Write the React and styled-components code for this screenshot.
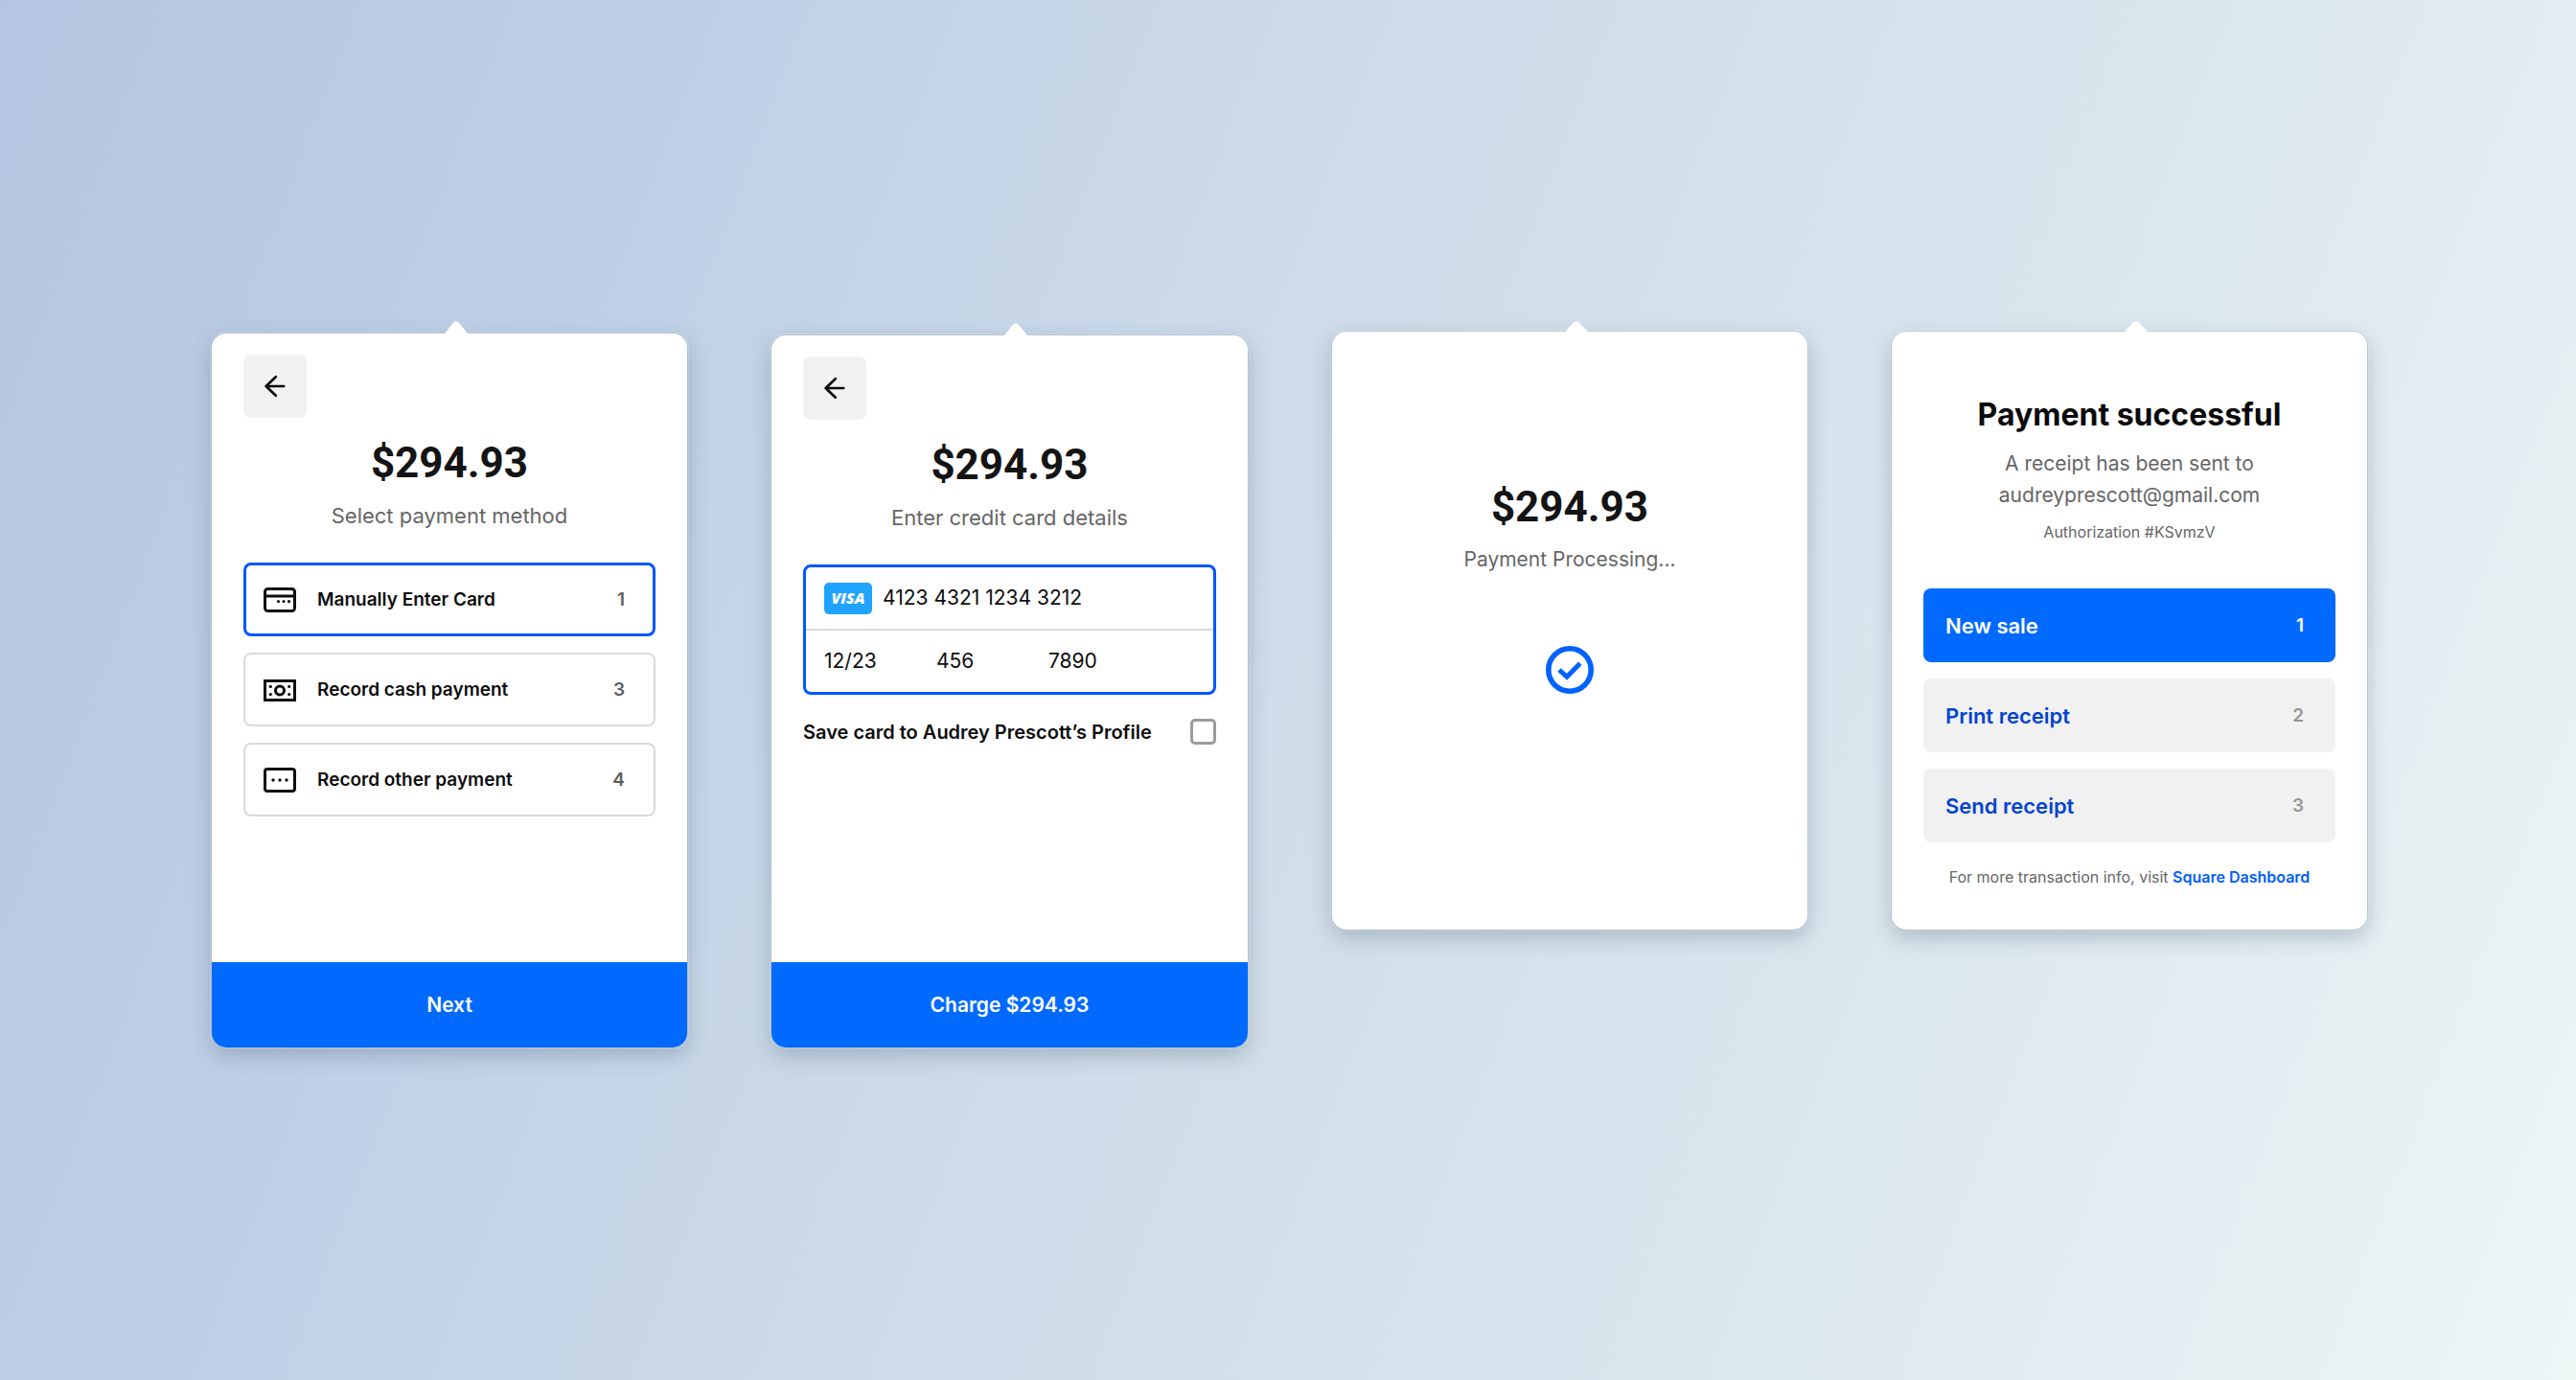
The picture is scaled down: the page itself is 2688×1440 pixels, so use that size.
import React from "react";
import styled, { createGlobalStyle, css } from "styled-components";

const GlobalStyle = createGlobalStyle`
  *, *::before, *::after { box-sizing: border-box; }
  body {
    margin: 0;
    font-family: Inter, "Liberation Sans", sans-serif;
    color: #1a1a1a;
  }
  button, input { font: inherit; color: inherit; }
  h1, h2, p { margin: 0; }
`;

const Page = styled.main`
  min-height: 100vh;
  display: grid;
  grid-template-columns: repeat(4, 1fr);
  align-content: start;
  align-items: end;
  column-gap: 88px;
  padding: 335px 218px 64px 221px;
  background: linear-gradient(111deg, #b3c5e0 0%, #c0d0e6 24%, #cfdce9 48%, #dce8ef 74%, #edf5f5 100%);
`;

const Screen = styled.section`
  display: flex;
  flex-direction: column;
  align-self: ${(p) => (p.$short ? "start" : "end")};
`;

const NotchRow = styled.div`
  display: flex;
  justify-content: center;
  height: ${(p) => (p.$short ? 11 : 13)}px;
  padding-left: 13px;
`;

const NotchShape = styled.svg`
  position: relative;
  z-index: 1;
  width: 26px;
  height: ${(p) => (p.$short ? 12 : 14)}px;
  flex: none;
  display: block;
`;

const CardBox = styled.div`
  display: flex;
  flex-direction: column;
  min-height: ${(p) => p.$minHeight}px;
  border-radius: 15px;
  overflow: hidden;
  background: #fff;
  box-shadow:
    0 0 0 1px rgba(160, 178, 196, 0.5),
    0 0 0 2px rgba(255, 255, 255, 0.2),
    0 8px 22px rgba(60, 80, 100, 0.3);
`;

const Body = styled.div`
  flex: 1;
  display: flex;
  flex-direction: column;
  padding: ${(p) => p.$top}px 33px 32px;
`;

const BackButton = styled.button`
  width: 66px;
  height: 66px;
  margin-bottom: 19px;
  display: grid;
  place-items: center;
  padding: 0;
  border: 0;
  border-radius: 8px;
  background: #f1f1f1;
  color: #0d0d0d;
`;

const Amount = styled.h1`
  font-family: Roboto, "Liberation Sans", sans-serif;
  font-size: 44px;
  font-weight: 700;
  line-height: 56px;
  text-align: center;
  color: #141414;
`;

const Subtitle = styled.p`
  margin-top: 11px;
  font-size: ${(p) => (p.$compact ? 21 : 22)}px;
  line-height: 32px;
  text-align: center;
  color: #666;
`;

const Stack = styled.div`
  display: flex;
  flex-direction: column;
  gap: 17px;
  margin-top: ${(p) => p.$top}px;
`;

const rowButton = css`
  display: flex;
  align-items: center;
  height: 77px;
  border-radius: 8px;
  text-align: left;
`;

const Method = styled.button`
  ${rowButton}
  gap: 22px;
  padding: 0 ${(p) => (p.$selected ? 29 : 30)}px 0 ${(p) => (p.$selected ? 18 : 19)}px;
  border: ${(p) => (p.$selected ? "3px solid #0055ff" : "2px solid #dadada")};
  background: #fff;
  color: #0d0d0d;
  font-size: 19px;
  font-weight: 600;
`;

const Action = styled.button`
  ${rowButton}
  padding: 0 33px 0 23px;
  border: 0;
  background: ${(p) => (p.$primary ? "#006aff" : "#f1f1f1")};
  color: ${(p) => (p.$primary ? "#fff" : "#0044d0")};
  font-size: 22px;
  font-weight: 600;
`;

const RowLabel = styled.span`
  flex: 1;
`;

const Shortcut = styled.span`
  font-size: 19px;
  font-weight: 600;
  color: ${(p) => p.$color};
`;

const Submit = styled.button`
  height: 89px;
  border: 0;
  background: #006aff;
  color: #fff;
  font-size: 21px;
  font-weight: 600;
`;

const CardFields = styled.div`
  margin-top: 33px;
  border: 3px solid #0055ff;
  border-radius: 8px;
`;

const FieldRow = styled.div`
  display: flex;
  align-items: center;
  height: ${(p) => (p.$divided ? 66 : 64)}px;
  padding: 0 19px;
  border-bottom: ${(p) => (p.$divided ? "2px solid #dadada" : "0")};
`;

const Field = styled.input`
  width: ${(p) => (p.$grow ? "auto" : "117px")};
  flex: ${(p) => (p.$grow ? 1 : "none")};
  min-width: 0;
  padding: 0;
  border: 0;
  outline: 0;
  background: transparent;
  font-size: 21px;
  line-height: 32px;
  color: #0d0d0d;
`;

const VisaBadge = styled.span`
  display: grid;
  place-items: center;
  width: 50px;
  height: 33px;
  margin-right: 11px;
  border-radius: 5px;
  background: #1fa3ff;
  color: #fff;
  font-family: "Open Sans", "Liberation Sans", sans-serif;
  font-size: 16px;
  font-weight: 800;
  font-style: italic;
`;

const SaveLabel = styled.label`
  display: flex;
  align-items: center;
  justify-content: space-between;
  margin-top: 25px;
  font-size: 20px;
  font-weight: 600;
  color: #0d0d0d;
`;

const Checkbox = styled.input`
  appearance: none;
  width: 27px;
  height: 27px;
  margin: 0;
  border: 3px solid #9c9c9c;
  border-radius: 5px;
  background: #fff;
`;

const DoneMark = styled.svg`
  align-self: center;
  width: 50px;
  height: 50px;
  margin-top: 74px;
`;

const Heading = styled.h1`
  font-size: 32px;
  font-weight: 700;
  line-height: 40px;
  text-align: center;
  color: #0a0a0a;
`;

const ReceiptText = styled.p`
  margin-top: 14px;
  font-size: 21px;
  line-height: 33px;
  text-align: center;
  color: #666;
`;

const Note = styled.p`
  margin-top: ${(p) => p.$top}px;
  font-size: 16px;
  line-height: 24px;
  text-align: center;
  color: #666;
`;

const NoteLink = styled.a`
  font-weight: 600;
  color: #005cff;
  text-decoration: none;
`;

const ArrowIcon = () => (
  <svg width="24" height="24" viewBox="0 0 24 24" fill="none" stroke="currentColor" strokeWidth="2.7" strokeLinecap="round" strokeLinejoin="round" aria-hidden="true">
    <path d="M12.8 2.2 2.6 12l10.2 9.8M2.6 12h18.6" />
  </svg>
);

const iconProps = { width: 34, height: 26, viewBox: "0 0 34 26", fill: "none", stroke: "currentColor", strokeWidth: 3, "aria-hidden": true };

const CardIcon = () => (
  <svg {...iconProps}>
    <rect x="1.5" y="1.5" width="31" height="23" rx="3" />
    <path d="M2 9h30" />
    <g fill="currentColor" stroke="none">
      <circle cx="15.5" cy="14.6" r="1.6" />
      <circle cx="21" cy="14.6" r="1.6" />
      <circle cx="26.5" cy="14.6" r="1.6" />
    </g>
  </svg>
);

const CashIcon = () => (
  <svg {...iconProps}>
    <rect x="1.5" y="3.5" width="31" height="20" />
    <circle cx="17" cy="13.5" r="4.5" />
    <g fill="currentColor" stroke="none">
      <circle cx="7.3" cy="9.4" r="1.6" />
      <circle cx="26.7" cy="9.4" r="1.6" />
      <circle cx="7.3" cy="17.6" r="1.6" />
      <circle cx="26.7" cy="17.6" r="1.6" />
    </g>
  </svg>
);

const OtherIcon = () => (
  <svg {...iconProps}>
    <rect x="1.5" y="1.5" width="31" height="23" rx="2.5" />
    <g fill="currentColor" stroke="none">
      <circle cx="10" cy="13" r="1.7" />
      <circle cx="17" cy="13" r="1.7" />
      <circle cx="24" cy="13" r="1.7" />
    </g>
  </svg>
);

function Popover({ short, minHeight, children }) {
  return (
    <Screen $short={short}>
      <NotchRow $short={short}>
        <NotchShape $short={short} viewBox="0 0 26 14" preserveAspectRatio="none" aria-hidden="true">
          <path d="M1 13 9.6 2.2Q13-1.6 16.4 2.2L25 13V14H1Z" fill="#fff" />
        </NotchShape>
      </NotchRow>
      <CardBox $minHeight={minHeight}>{children}</CardBox>
    </Screen>
  );
}

const methods = [
  { label: "Manually Enter Card", shortcut: "1", Icon: CardIcon, selected: true },
  { label: "Record cash payment", shortcut: "3", Icon: CashIcon },
  { label: "Record other payment", shortcut: "4", Icon: OtherIcon },
];

const actions = [
  { label: "New sale", shortcut: "1", primary: true },
  { label: "Print receipt", shortcut: "2" },
  { label: "Send receipt", shortcut: "3" },
];

export default function App() {
  return (
    <>
      <GlobalStyle />
      <Page>
        <Popover minHeight={745}>
          <Body $top={22}>
            <BackButton type="button" aria-label="Back"><ArrowIcon /></BackButton>
            <Amount>$294.93</Amount>
            <Subtitle>Select payment method</Subtitle>
            <Stack $top={33}>
              {methods.map(({ label, shortcut, Icon, selected }) => (
                <Method key={label} type="button" $selected={selected}>
                  <Icon />
                  <RowLabel>{label}</RowLabel>
                  <Shortcut $color="#5e5e5e">{shortcut}</Shortcut>
                </Method>
              ))}
            </Stack>
          </Body>
          <Submit type="button">Next</Submit>
        </Popover>

        <Popover minHeight={743}>
          <Body $top={22}>
            <BackButton type="button" aria-label="Back"><ArrowIcon /></BackButton>
            <Amount>$294.93</Amount>
            <Subtitle>Enter credit card details</Subtitle>
            <CardFields>
              <FieldRow $divided>
                <VisaBadge>VISA</VisaBadge>
                <Field $grow aria-label="Card number" defaultValue="4123 4321 1234 3212" />
              </FieldRow>
              <FieldRow>
                <Field aria-label="Expiration date" defaultValue="12/23" />
                <Field aria-label="Security code" defaultValue="456" />
                <Field aria-label="Postal code" defaultValue="7890" />
              </FieldRow>
            </CardFields>
            <SaveLabel htmlFor="save-card">
              Save card to Audrey Prescott’s Profile
              <Checkbox id="save-card" type="checkbox" />
            </SaveLabel>
          </Body>
          <Submit type="button">Charge $294.93</Submit>
        </Popover>

        <Popover short minHeight={624}>
          <Body $top={155}>
            <Amount>$294.93</Amount>
            <Subtitle $compact>Payment Processing...</Subtitle>
            <DoneMark viewBox="0 0 50 50" fill="none" stroke="#0062ff" aria-hidden="true">
              <circle cx="25" cy="25" r="22.2" strokeWidth="5.6" />
              <path d="M14 25l8 7.2L35.8 18.2" strokeWidth="5" />
            </DoneMark>
          </Body>
        </Popover>

        <Popover short minHeight={624}>
          <Body $top={67}>
            <Heading>Payment successful</Heading>
            <ReceiptText>
              A receipt has been sent to
              <br />
              audreyprescott@gmail.com
            </ReceiptText>
            <Note $top={10}>Authorization #KSvmzV</Note>
            <Stack $top={47}>
              {actions.map(({ label, shortcut, primary }) => (
                <Action key={label} type="button" $primary={primary}>
                  <RowLabel>{label}</RowLabel>
                  <Shortcut $color={primary ? "#fff" : "#969696"}>{shortcut}</Shortcut>
                </Action>
              ))}
            </Stack>
            <Note $top={24}>
              For more transaction info, visit <NoteLink href="#dashboard">Square Dashboard</NoteLink>
            </Note>
          </Body>
        </Popover>
      </Page>
    </>
  );
}
